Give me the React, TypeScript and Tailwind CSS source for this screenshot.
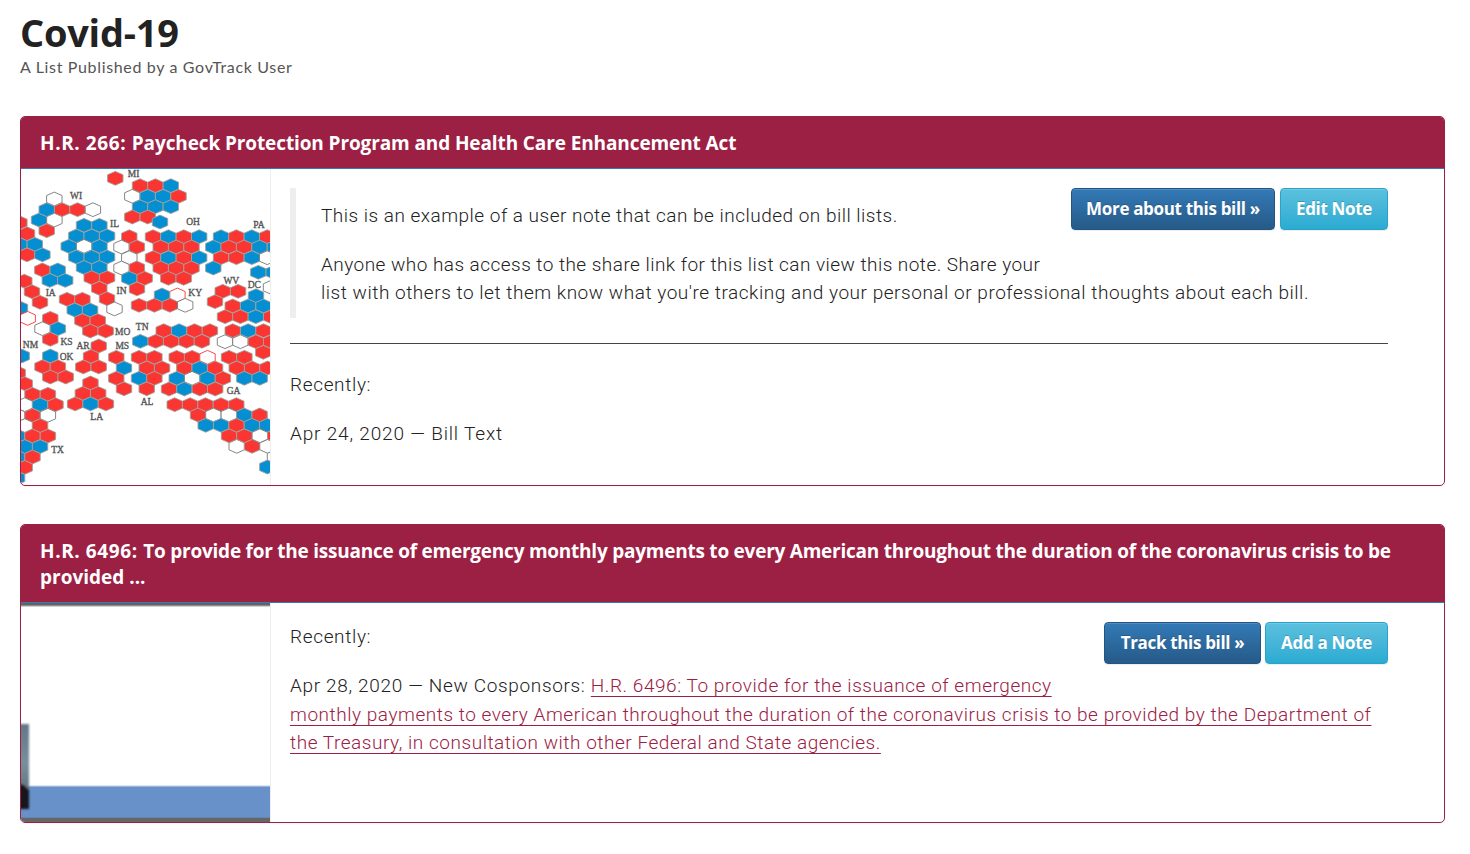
import type { ReactNode } from 'react';

type Row = [number, number, string];

// Each row: x and y of the first hexagon's centre, then one letter per hexagon.
const rows: Row[] = [
  [115.3, 178.3, 'R'],
  [54.3, 199, 'W'], [39, 220, 'BW'], [46.7, 209.7, 'BRRW'], [46.7, 230.7, 'R'],
  [19.4, 222.7, 'R'], [27, 233.7, 'R'], [19.4, 244.3, 'BB'], [27, 254.8, 'RB'],
  [84, 225.3, 'BB'], [76.3, 236, 'BBB'], [68.7, 246.3, 'BWB'], [76.3, 257, 'BBB'], [84, 267.5, 'BB'],
  [91.7, 277.7, 'RR'], [99.3, 288.3, 'R'], [107, 298.7, 'R'], [114.5, 308.9, 'W'],
  [140, 185.7, 'RRB'], [132.3, 196.3, 'WBBR'], [140, 206.7, 'BBB'], [132.3, 217, 'RR'], [160, 222, 'B'],
  [129.3, 236.7, 'R'], [121.5, 247, 'WR'], [129.3, 257.7, 'W'], [121.5, 268, 'WR'], [129.3, 278.3, 'BR'], [137, 288.9, 'R'],
  [153, 236.7, 'RBRB'], [160.7, 247, 'RRR'], [153, 257.7, 'RBRB'], [160.7, 268, 'RRR'], [168.3, 278.3, 'RR'],
  [221, 236.7, 'BRBR'], [213.3, 247, 'BRRBB'], [221, 257.7, 'RRBW'], [213.3, 268, 'B'], [258.3, 272.3, 'BB'],
  [177.4, 295, 'P'], [162, 295, 'B'], [139, 305.3, 'RRRW'],
  [222.7, 291.3, 'RR'], [215, 301.7, 'R'], [271, 287.3, 'W'],
  [256, 295.7, 'B'], [232.7, 306, 'RBB'], [225, 316.7, 'RRBR'],
  [163.7, 330.7, 'RBRR'], [140.3, 341.3, 'BRRRR'],
  [232.7, 330.7, 'RBR'], [225, 341.7, 'WWRR'], [263.3, 352.3, 'R'],
  [116.3, 357.3, 'R'], [124, 368, 'B'], [116.3, 378.3, 'R'], [124, 388.8, 'R'],
  [139, 357.3, 'RR'], [146.7, 368, 'RR'], [139, 378.3, 'BR'], [146.7, 388.8, 'R'],
  [176.7, 357.3, 'RRP'], [184.3, 368, 'RBR'], [176.7, 378.3, 'BWBR'], [169, 389, 'RBRR'],
  [229, 357.3, 'RR'], [236.7, 368, 'RRR'], [244.3, 378.3, 'BB'],
  [174.7, 404.7, 'RRRRR'], [198, 415, 'RWWBR'], [205.7, 425.3, 'BBRBB'], [275, 456.7, 'W'], [236.7, 446.3, 'WRW'], [229, 435.8, 'RRWR'], [267.3, 467, 'B'],
  [42.3, 270, 'RB'], [49.8, 280.4, 'BB'],
  [24.3, 281.2, 'R'], [32, 291.7, 'R'], [40, 302.3, 'R'], [20, 308, 'B'], [27.7, 318.4, 'P'],
  [67, 299.3, 'RR'], [74.7, 310, 'BB'], [82.4, 320.6, 'RR'], [90.3, 331, 'RR'],
  [50.3, 318.3, 'R'], [42.5, 328.7, 'WB'], [50.3, 339.3, 'R'],
  [98.7, 346, 'R'], [91, 356.4, 'R'], [83.3, 366.9, 'RR'],
  [21.7, 356, 'B'], [50.3, 356, 'B'], [42.5, 366.7, 'RR'], [50.3, 377, 'RR'],
  [17.7, 373, 'R'], [24.7, 383.7, 'R'], [32.5, 394.3, 'RR'], [24.7, 404.7, 'WBR'], [17.1, 415.3, 'WRW'],
  [24.7, 425.6, 'WR'], [17.1, 436, 'BRR'], [24.7, 446.6, 'BB'], [17.1, 457, 'BR'], [24.7, 467.4, 'R'], [17.1, 478, 'B'],
  [90.5, 383, 'R'], [82.8, 393.4, 'RR'], [75.1, 403.9, 'RBR'],
];

const labels: [string, number, number][] = [
  ['MI', 133.5, 173.5], ['WI', 76, 196], ['IL', 114.5, 224], ['OH', 193, 221.5], ['PA', 259, 224.5],
  ['IA', 50.7, 292.7], ['IN', 121.5, 291], ['KY', 195.2, 293.3], ['WV', 231.3, 281], ['DC', 254.3, 285],
  ['MO', 122.6, 331.7], ['TN', 142.2, 326.5], ['MS', 122.3, 345.7], ['KS', 66.5, 341.8], ['AR', 83, 346.3],
  ['NM', 30.5, 345], ['OK', 66.5, 356.5], ['GA', 233.5, 390.7], ['AL', 147, 402], ['LA', 96.7, 417.3], ['TX', 57.5, 450.3],
];

const fills: Record<string, string> = { R: '#fa3532', B: '#048fd2', W: '#fff', P: '#fff' };
const strokes: Record<string, string> = { R: '#a0a09c', B: '#a0a09c', W: '#777', P: '#fa3532' };

function HexMap() {
  return (
    <svg viewBox="21 169 249 316" className="block h-[316px] w-[249px] shrink-0">
      {rows.flatMap(([x, y, cells]) =>
        cells.split('').map((c, i) => (
          <path
            key={`${x}-${y}-${i}`}
            transform={`translate(${x + i * 15.4} ${y})`}
            d="M0 -6.9L7.7 -3.5V3.5L0 6.9L-7.7 3.5V-3.5Z"
            fill={fills[c]}
            stroke={strokes[c]}
            strokeWidth="0.9"
          />
        )),
      )}
      {labels.map(([t, x, y]) => (
        <text
          key={t}
          x={x}
          y={y + 3}
          textAnchor="middle"
          fontSize="9.5"
          fill="#555"
          stroke="#555"
          strokeWidth="0.35"
          fontFamily="'Liberation Serif', serif"
        >
          {t}
        </text>
      ))}
    </svg>
  );
}

function BillPhoto() {
  return (
    <svg viewBox="0 0 249 219" className="block h-[219px] w-[249px] shrink-0">
      <defs>
        <linearGradient id="slate" x1="0" y1="0" x2="0" y2="1">
          <stop offset="0" stopColor="#627787" />
          <stop offset="0.6" stopColor="#788f9c" />
          <stop offset="1" stopColor="#637682" />
        </linearGradient>
        <filter id="soft" x="-50%" y="-10%" width="200%" height="120%">
          <feGaussianBlur stdDeviation="0.8" />
        </filter>
      </defs>
      <rect width="249" height="219" fill="#fff" />
      <rect width="249" height="2" fill="#636363" />
      <rect y="2" width="249" height="1" fill="#8c8c8c" />
      <rect y="3" width="249" height="1" fill="#d0d0d0" />
      <rect y="182" width="249" height="1" fill="#dce5f3" />
      <rect y="183" width="249" height="1" fill="#9db5dc" />
      <rect y="184" width="249" height="31" fill="#6890c9" />
      <rect y="214" width="249" height="1" fill="#6784b0" />
      <rect y="215" width="249" height="4" fill="#646668" />
      <g filter="url(#soft)">
        <rect x="-4" y="121" width="12" height="66" fill="url(#slate)" />
        <path d="M-4 180L3 182L8 187V206H-4Z" fill="#17171b" />
      </g>
    </svg>
  );
}

function Line({ className = '', children }: { className?: string; children: ReactNode }) {
  return <span className={`block whitespace-nowrap ${className}`}>{children}</span>;
}

const body = "font-['Roboto',sans-serif] font-light text-[19px] leading-[28.5px] text-[#222]";
const button =
  "h-[42px] rounded-[4px] border font-['Open_Sans',sans-serif] text-[17px] font-bold tracking-[-0.33px] text-white whitespace-nowrap shadow-[inset_0_1px_0_rgba(255,255,255,0.15),0_1px_1px_rgba(0,0,0,0.075)] [text-shadow:0_-1px_0_rgba(0,0,0,0.2)]";
const blue = 'border-[#245580] bg-linear-to-b from-[#337ab7] to-[#265a88]';
const cyan = 'border-[#28a4c9] bg-linear-to-b from-[#5bc0de] to-[#2aabd2]';
const card = 'overflow-hidden rounded-[5px] border border-[#9c2044] shadow-[0_1px_2px_rgba(0,0,0,0.05)]';
const head =
  "border-b border-[#337ab7] bg-[#9c2044] px-[19px] font-['Open_Sans',sans-serif] text-[19px] font-bold leading-[26px] text-white";
const link =
  'text-[#9c2044] underline decoration-1 underline-offset-[4px] [text-decoration-skip-ink:none]';

export default function App() {
  return (
    <main className="h-[854px] w-[1470px] overflow-hidden bg-white pl-5 pr-[25px] pt-[10px]">
      <h1 className="h-[45px] whitespace-nowrap font-['Open_Sans',sans-serif] text-[38px] font-bold leading-[45px] tracking-[-0.25px] text-[#222]">
        Covid-19
      </h1>
      <p className="h-[23px] whitespace-nowrap font-['Lato',sans-serif] text-[16px] leading-[23px] tracking-[0.66px] text-[#555]">
        A List Published by a GovTrack User
      </p>

      <section className={`mt-[38px] h-[370px] ${card}`}>
        <h2 className={`h-[52px] pt-[13px] ${head}`}>
          <Line className="tracking-[-0.11px]">
            <span className="tracking-[0.6px]">H.R. 266: </span>
            Paycheck Protection Program and Health Care Enhancement Act
          </Line>
        </h2>
        <div className="flex h-[316px]">
          <HexMap />
          <div className={`flex-1 border-l border-[#eee] pl-[19px] pr-14 pt-[19px] ${body}`}>
            <div className="flex h-[130px] border-l-[6px] border-[#eee] pl-[25px]">
              <div className="w-[750px] shrink-0 pt-[14px]">
                <Line className="tracking-[0.49px]">
                  This is an example of a user note that can be included on bill lists.
                </Line>
                <div className="pt-5">
                  <Line className="tracking-[0.46px]">
                    Anyone who has access to the share link for this list can view this note. Share your
                  </Line>
                  <Line className="tracking-[0.535px]">
                    list with others to let them know what you're tracking and your personal or professional thoughts about each bill.
                  </Line>
                </div>
              </div>
              <div className="flex gap-[5px]">
                <button className={`w-[204px] ${button} ${blue}`}>More about this bill »</button>
                <button className={`w-[108px] ${button} ${cyan}`}>Edit Note</button>
              </div>
            </div>
            <hr className="mt-[25px] border-t border-[#444]" />
            <p className="pt-[27px] tracking-[0.65px]">Recently:</p>
            <p className="pt-[20px] tracking-[0.82px]">Apr 24, 2020 — Bill Text</p>
          </div>
        </div>
      </section>

      <section className={`mt-[38px] h-[299px] ${card}`}>
        <h2 className={`h-[78px] pt-[13px] ${head}`}>
          <Line className="tracking-[-0.236px]">
            <span className="tracking-[0.6px]">H.R. 6496: </span>
            To provide for the issuance of emergency monthly payments to every American throughout the duration of the coronavirus crisis to be
          </Line>
          <Line>provided ...</Line>
        </h2>
        <div className="flex h-[219px]">
          <BillPhoto />
          <div className={`flex-1 border-l border-[#eee] pl-[19px] pr-14 pt-[19px] ${body}`}>
            <div className="flex h-[50px] justify-between">
              <p className="pt-px tracking-[0.65px]">Recently:</p>
              <div className="flex items-start gap-1">
                <button className={`w-[157px] ${button} ${blue}`}>Track this bill »</button>
                <button className={`w-[123px] ${button} ${cyan}`}>Add a Note</button>
              </div>
            </div>
            <Line>
              <span className="tracking-[0.66px]">Apr 28, 2020 — New Cosponsors: </span>
              <span className={`tracking-[0.55px] ${link}`}>H.R. 6496: To provide for the issuance of emergency</span>
            </Line>
            <Line>
              <span className={`tracking-[0.54px] ${link}`}>
                monthly payments to every American throughout the duration of the coronavirus crisis to be provided by the Department of
              </span>
            </Line>
            <Line>
              <span className={`tracking-[0.54px] ${link}`}>
                the Treasury, in consultation with other Federal and State agencies.
              </span>
            </Line>
          </div>
        </div>
      </section>
    </main>
  );
}
